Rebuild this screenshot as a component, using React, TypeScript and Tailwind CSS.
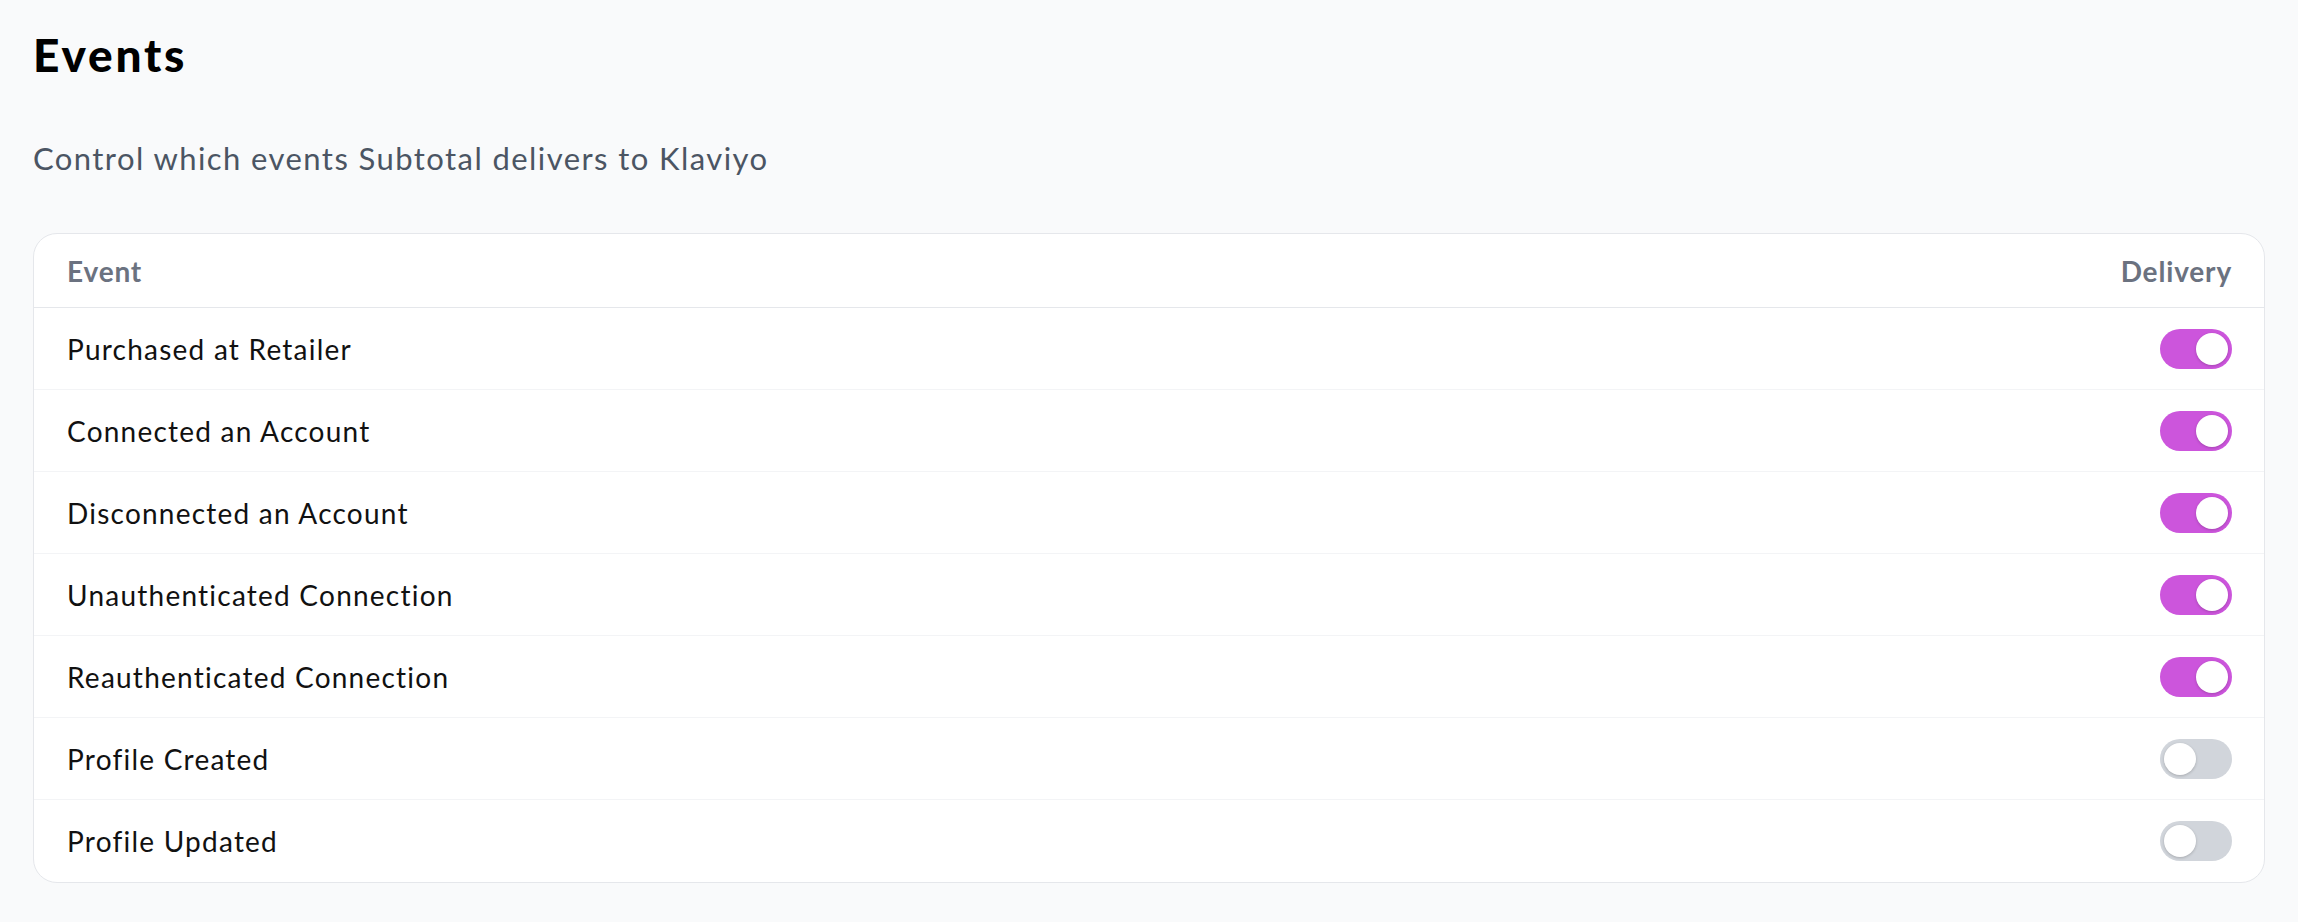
import React, { useState } from 'react';

interface EventRow {
  name: string;
  enabled: boolean;
}

const initialEvents: EventRow[] = [
  { name: 'Purchased at Retailer', enabled: true },
  { name: 'Connected an Account', enabled: true },
  { name: 'Disconnected an Account', enabled: true },
  { name: 'Unauthenticated Connection', enabled: true },
  { name: 'Reauthenticated Connection', enabled: true },
  { name: 'Profile Created', enabled: false },
  { name: 'Profile Updated', enabled: false },
];

const Toggle: React.FC<{ on: boolean; onChange: () => void }> = ({ on, onChange }) => (
  <button
    type="button"
    onClick={onChange}
    className={`relative flex h-[40px] w-[72px] shrink-0 items-center rounded-full p-[4px] ${
      on ? 'bg-[#cc55dc]' : 'bg-[#d1d5db]'
    }`}
  >
    <span
      className={`block h-[32px] w-[32px] rounded-full bg-white shadow-[0_1px_3px_rgba(0,0,0,0.2)] ${
        on ? 'translate-x-[32px]' : 'translate-x-0'
      }`}
    />
  </button>
);

export default function App() {
  const [events, setEvents] = useState(initialEvents);

  const toggle = (i: number) =>
    setEvents((prev) => prev.map((e, idx) => (idx === i ? { ...e, enabled: !e.enabled } : e)));

  return (
    <div className="min-h-screen bg-[#f9fafb] px-[33px] pt-[32px] pb-[40px] font-['Lato',sans-serif]">
      {/* Heading */}
      <h1 className="text-[46px] leading-none font-black tracking-[0.06em] text-black">Events</h1>
      <p className="mt-[65px] text-[31px] leading-none tracking-[0.046em] text-[#4b5563]">
        Control which events Subtotal delivers to Klaviyo
      </p>

      {/* Events table */}
      <div className="mt-[59px] overflow-hidden rounded-[24px] border border-[#e5e7eb] bg-white">
        <div className="flex h-[74px] items-center justify-between border-b border-[#e5e7eb] pl-[33px] pr-[32px]">
          <span className="text-[28px] leading-none font-bold tracking-[0.03em] text-[#6b7280]">Event</span>
          <span className="text-[28px] leading-none font-bold tracking-[0.03em] text-[#6b7280]">Delivery</span>
        </div>
        {events.map((e, i) => (
          <div
            key={e.name}
            className={`flex h-[82px] items-center justify-between pl-[33px] pr-[32px] ${
              i < events.length - 1 ? 'border-b border-[#f3f4f6]' : ''
            }`}
          >
            <span className="text-[28px] leading-none tracking-[0.044em] text-[#111111]">{e.name}</span>
            <Toggle on={e.enabled} onChange={() => toggle(i)} />
          </div>
        ))}
      </div>
    </div>
  );
}
